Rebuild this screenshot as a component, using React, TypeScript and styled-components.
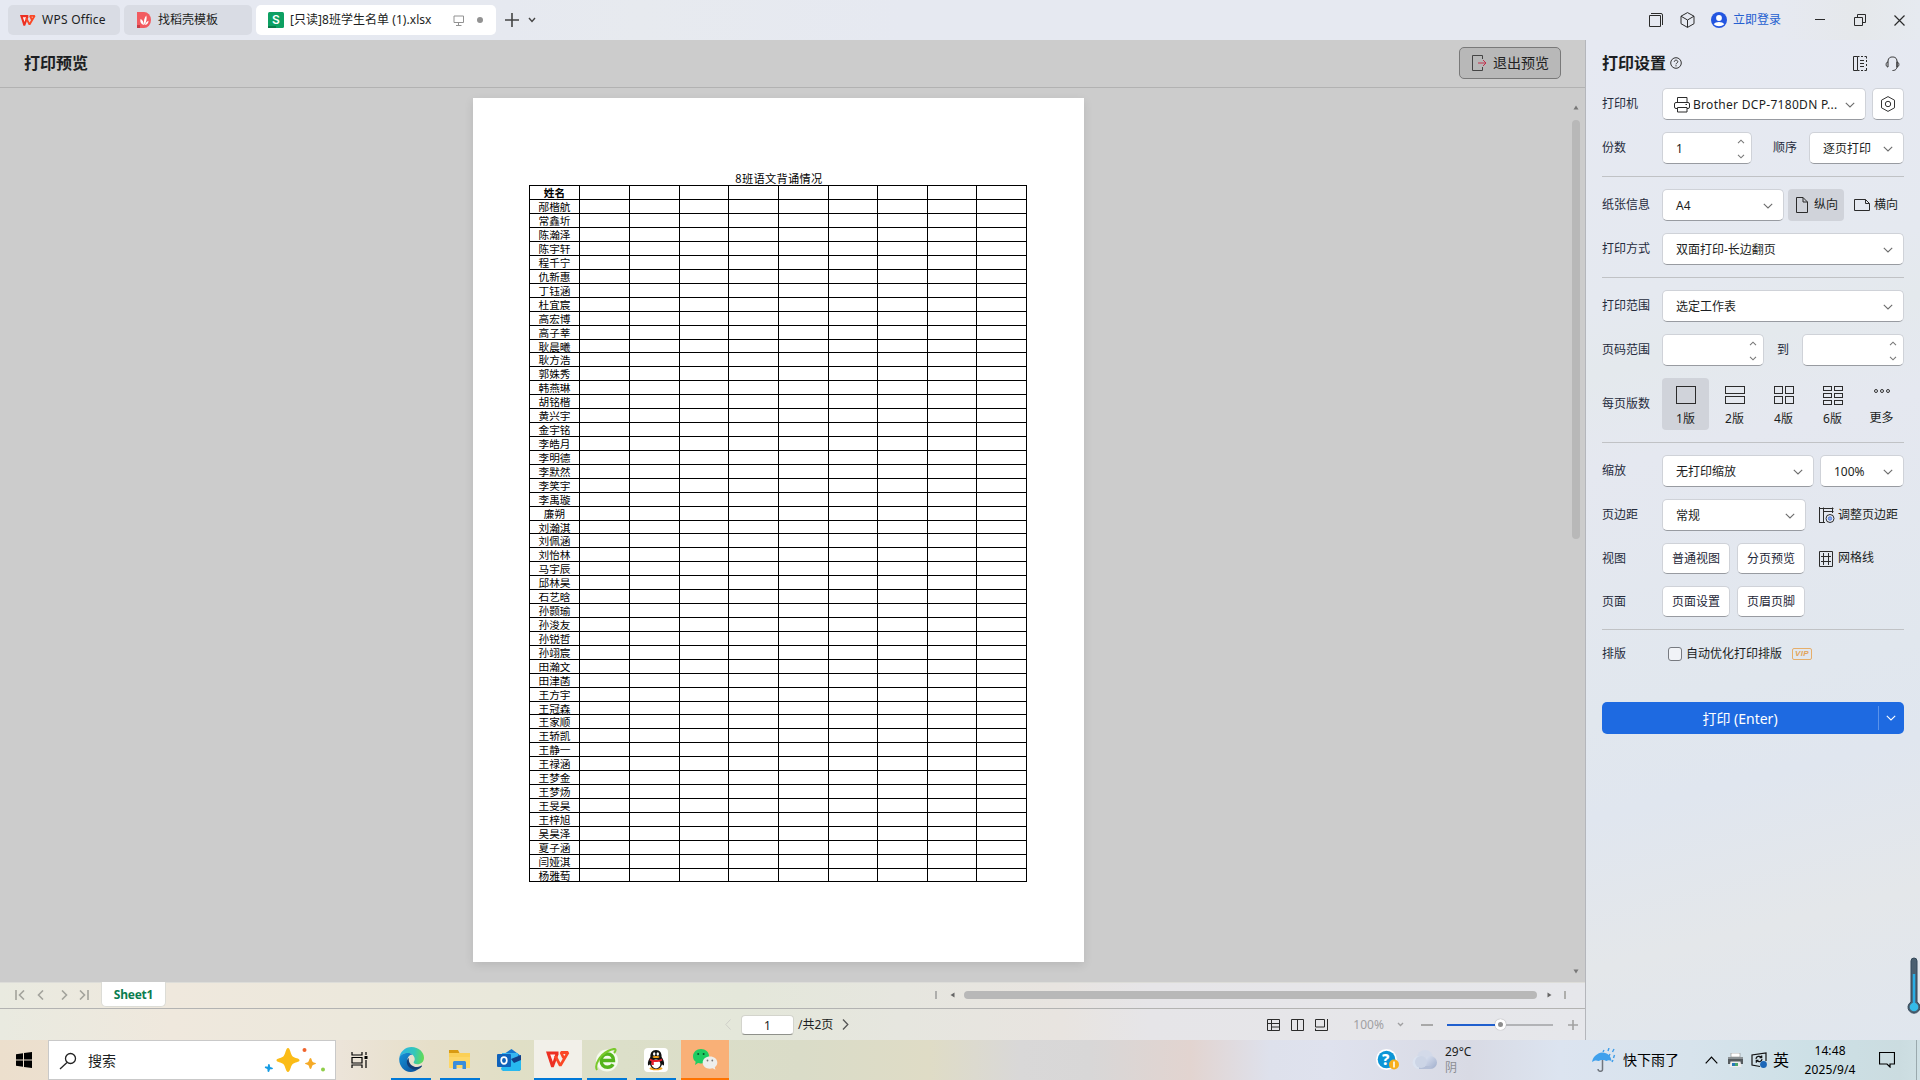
import React from "react";
import styled, { createGlobalStyle, css } from "styled-components";

const UI = `"Noto Sans", "Noto Sans CJK SC", sans-serif`;

const GlobalStyle = createGlobalStyle`
  * { box-sizing: border-box; }
  html, body { margin: 0; padding: 0; }
  body { width: 1920px; height: 1080px; overflow: hidden; font: 12px/16px ${UI}; color: #1c1e22; }
  svg { display: block; flex: none; }
`;

const Screen = styled.div`
  width: 1920px;
  height: 1080px;
  display: flex;
  flex-direction: column;
  position: relative;
  background: #e6e9f1;
`;

/* ---------- title bar ---------- */
const TitleBar = styled.header`
  height: 40px;
  flex: none;
  display: flex;
  align-items: center;
  padding-left: 8px;
  background: linear-gradient(90deg, #e6e9f2 0, #e6e9f0 500px, #e7eaef 640px, #e6e9f1 900px, #e6e9f1 1780px, #e5e8eb 1860px, #e6eaf0);
`;
const Tab = styled.div<{ $w: number; $active?: boolean }>`
  width: ${(p) => p.$w}px;
  height: 30px;
  margin-right: 4px;
  border-radius: 5px;
  display: flex;
  align-items: center;
  padding-left: 12px;
  background: ${(p) => (p.$active ? "#fff" : "#d9dce4")};
`;
const Label = styled.span<{ $ml?: number; $size?: number; $ls?: number; $color?: string; $bold?: boolean; $w?: number; $up?: number }>`
  margin-left: ${(p) => p.$ml ?? 0}px;
  padding-bottom: ${(p) => p.$up ?? 0}px;
  font-size: ${(p) => p.$size ?? 12}px;
  letter-spacing: ${(p) => p.$ls ?? 0}px;
  color: ${(p) => p.$color ?? "inherit"};
  font-weight: ${(p) => (p.$bold ? 700 : 400)};
  ${(p) => p.$w && css`width: ${p.$w}px;`}
  flex: none;
  white-space: nowrap;
`;
const Dot = styled.i`
  width: 6px;
  height: 6px;
  margin-left: 13px;
  border-radius: 50%;
  background: #929292;
`;
const WindowButtons = styled.div`
  margin-left: auto;
  display: flex;
  align-items: center;
  padding-right: 15px;
`;
const Gap = styled.span<{ $w: number }>`
  width: ${(p) => p.$w}px;
  flex: none;
`;

/* ---------- main split ---------- */
const Main = styled.div`
  height: 1000px;
  flex: none;
  display: flex;
`;
const Left = styled.section`
  width: 1585px;
  flex: none;
  display: flex;
  flex-direction: column;
`;
const PreviewHeader = styled.div`
  height: 48px;
  flex: none;
  display: flex;
  align-items: center;
  justify-content: space-between;
  padding: 0 24px 1px;
  background: #ccc;
  border-bottom: 1px solid #b2b2b2;
`;
const ExitButton = styled.button`
  width: 102px;
  height: 32px;
  display: flex;
  align-items: center;
  padding: 0 0 0 11px;
  border: 1px solid #797979;
  border-radius: 5px;
  background: #b8b8b8;
  font: 14px/18px ${UI};
  color: #222;
`;
const Canvas = styled.div`
  height: 894px;
  flex: none;
  display: flex;
  justify-content: space-between;
  background: #ccc;
`;
const Paper = styled.div`
  width: 611px;
  height: 864px;
  margin: 10px 0 0 473px;
  padding: 74px 0 0 56px;
  background: #fff;
  box-shadow: 0 3px 9px rgba(0, 0, 0, 0.1);
`;
const SheetTitle = styled.div`
  width: 498px;
  height: 13px;
  padding-left: 2px;
  text-align: center;
  font: 11.2px/12px "Noto Sans CJK SC", sans-serif;
  letter-spacing: 0.35px;
  color: #000;
`;
const Grid = styled.div`
  width: 498px;
  border-left: 1px solid #000;
  border-top: 1px solid #000;
`;
const GridRow = styled.div<{ $h: number; $head?: boolean }>`
  display: grid;
  grid-template-columns: 50px 50px 50px 49px 50px 50px 49px 50px 49px 50px;
  grid-template-rows: ${(p) => p.$h}px;
  font: ${(p) => (p.$head ? 700 : 400)} 10.67px/13px "Noto Sans CJK SC", sans-serif;
  color: #000;
`;
const Cell = styled.div`
  border-right: 1px solid #000;
  border-bottom: 1px solid #000;
  text-align: center;
  white-space: nowrap;
`;
const VScroll = styled.div`
  width: 18px;
  display: flex;
  flex-direction: column;
  align-items: center;
  padding: 17px 0 8px;
`;
const VThumb = styled.div`
  width: 8px;
  height: 419px;
  margin: 10px 0 auto;
  border-radius: 4px;
  background: #b8b8b8;
`;
const wash = "linear-gradient(90deg,#e9eae0 0,#efe8dd 170px,#ece8dc 350px,#e6e8da 640px,#e4e7da 740px,#e6e6df 900px,#e8e4e0 1060px,#e6e5e8 1150px,#e6e7eb 1585px)";
const SheetBar = styled.div`
  height: 27px;
  flex: none;
  display: flex;
  align-items: center;
  padding: 0 0 1px 15px;
  background: ${wash};
  border-top: 1px solid #ddddd9;
  border-bottom: 1px solid #b3b3b2;
`;
const SheetTab = styled.div`
  width: 65px;
  height: 25px;
  margin: -2px 0 0 12px;
  border: 1px solid #dcdcd6;
  border-top: 0;
  border-radius: 0 0 5px 5px;
  background: #fff;
  color: #0b7d4f;
  font: 700 12px/25px ${UI};
  letter-spacing: -0.25px;
  text-align: center;
`;
const HThumb = styled.div`
  width: 573px;
  height: 8px;
  border-radius: 4px;
  background: #b8b8b8;
`;
const Tick = styled.i`
  width: 2px;
  height: 8px;
  background: #aeaeac;
`;
const StatusBar = styled.div`
  height: 31px;
  flex: none;
  display: flex;
  align-items: center;
  background: ${wash};
`;
const PageInput = styled.div`
  width: 53px;
  height: 20px;
  margin: 0 4px 0 10px;
  border: 1px solid #d3d4cc;
  border-bottom-color: #8f918b;
  border-radius: 4px;
  background: #fff;
  text-align: center;
  line-height: 19px;
`;
const Track = styled.div`
  width: 106px;
  height: 12px;
  display: flex;
  align-items: center;
`;
const TrackPart = styled.i<{ $w: number; $c: string }>`
  width: ${(p) => p.$w}px;
  height: 2px;
  background: ${(p) => p.$c};
`;
const Knob = styled.i`
  width: 11px;
  height: 11px;
  border: 3px solid #fff;
  border-radius: 50%;
  background: #8d8d8d;
  box-shadow: 0 0 1px rgba(0, 0, 0, 0.45);
`;

/* ---------- settings panel ---------- */
const Panel = styled.aside`
  width: 335px;
  flex: none;
  padding: 0 16px;
  border-left: 1px solid #b4b6bb;
  background: linear-gradient(166deg, #e6e9f2 0%, #e5e9f0 25%, #e4e9ed 31%, #e5e8f0 40%, #e1e7ee 63%, #e0e6ef 72%, #e4e7ea 86%, #e0e6ee 100%);
`;
const Row = styled.div<{ $mt?: number; $h?: number }>`
  height: ${(p) => p.$h ?? 32}px;
  margin-top: ${(p) => p.$mt ?? 12}px;
  display: flex;
  align-items: center;
`;
const RowLabel = styled.span`
  width: 60px;
  flex: none;
  color: #252b3c;
`;
const Rule = styled.hr`
  height: 1px;
  margin: 12px 0 0;
  border: 0;
  background: #c0c2c5;
`;
const Field = styled.div<{ $w: number; $pl?: number }>`
  width: ${(p) => p.$w}px;
  height: 32px;
  flex: none;
  display: flex;
  align-items: center;
  justify-content: space-between;
  padding: 1px 10px 0 ${(p) => p.$pl ?? 13}px;
  border: 1px solid #cfd2d8;
  border-bottom-color: #989ba1;
  border-radius: 5px;
  background: #fff;
`;
const FieldButton = styled.button<{ $w: number; $h?: number }>`
  width: ${(p) => p.$w}px;
  height: ${(p) => p.$h ?? 31}px;
  display: flex;
  align-items: center;
  justify-content: center;
  padding: 0;
  border: 1px solid #cfd2d8;
  border-bottom-color: #989ba1;
  border-radius: 5px;
  background: #fff;
  font: 12px/16px ${UI};
  color: #1e2738;
`;
const Spin = styled.span`
  display: flex;
  flex-direction: column;
  gap: 10px;
  margin-right: -4px;
`;
const Orient = styled.div`
  width: 56px;
  height: 32px;
  margin: 0 10px 0 4px;
  padding-left: 8px;
  display: flex;
  align-items: center;
  border-radius: 4px;
  background: #d0d3da;
`;
const Layouts = styled.div`
  display: flex;
  gap: 2px;
`;
const LayoutOption = styled.div<{ $on?: boolean }>`
  width: 47px;
  height: 52px;
  display: flex;
  flex-direction: column;
  align-items: center;
  gap: 6px;
  padding-top: 8px;
  border-radius: 4px;
  background: ${(p) => (p.$on ? "#d0d3da" : "transparent")};
`;
const Check = styled.i`
  width: 14px;
  height: 14px;
  margin: 0 4px 0 6px;
  border: 1px solid #777a80;
  border-radius: 3px;
  background: #f1f3f7;
`;
const Vip = styled.span`
  width: 20px;
  height: 12px;
  margin-left: 10px;
  border: 1px solid #e6ae6a;
  border-radius: 2px;
  color: #e2a45a;
  font: italic 700 8px/10px "Liberation Sans", sans-serif;
  letter-spacing: 0.3px;
  text-align: center;
`;
const PrintButton = styled.div`
  height: 32px;
  margin-top: 34px;
  display: flex;
  align-items: center;
  border-radius: 5px;
  background: #1e6ae1;
  color: #fff;
  font-size: 14px;
`;
const PrintMain = styled.span`
  width: 277px;
  height: 24px;
  line-height: 25px;
  text-align: center;
  border-right: 1px solid #5b93ea;
`;

/* ---------- task bar ---------- */
const TaskBar = styled.footer`
  height: 40px;
  flex: none;
  display: flex;
  align-items: center;
  background: linear-gradient(90deg, #ecdfcd 0, #ece4d9 340px, #e6dfc9 430px, #e0dfc6 520px, #dcdfc9 620px, #dadcc8 800px, #dfdcc6 930px, #d9d8d8 1020px, #d8d7d7 1090px, #e2d4d0 1190px, #dee1ec 1270px, #dfe2ee 1330px, #d8dae4 1470px, #dce4f0 1560px, #d7e3ec 1690px, #cde0e6 1810px, #cbdce0 1900px, #cfe0e4);
`;
const SearchBox = styled.div`
  width: 288px;
  height: 40px;
  margin-left: 14px;
  display: flex;
  align-items: center;
  padding: 2px 0 0 10px;
  border: 1px solid #c9c9c9;
  background: #fff;
`;
const AppIcon = styled.div<{ $w?: number; $ml?: number; $bg?: string; $bar?: string }>`
  width: ${(p) => p.$w ?? 40}px;
  height: 40px;
  margin-left: ${(p) => p.$ml ?? 9}px;
  display: flex;
  align-items: center;
  justify-content: center;
  padding-top: 1px;
  background: ${(p) => p.$bg ?? "transparent"};
  border-bottom: 2px solid ${(p) => p.$bar ?? "transparent"};
`;
const Weather = styled.div`
  width: 147px;
  margin-left: 7px;
  font-size: 12px;
  line-height: 16px;
`;
const Faded = styled.div`
  color: #8b8d93;
`;
const Clock = styled.div`
  width: 64px;
  margin-left: 9px;
  text-align: center;
  font-size: 12px;
  line-height: 19px;
  letter-spacing: 0.1px;
  color: #000;
`;
const DesktopEdge = styled.i`
  width: 1px;
  height: 40px;
  margin-left: 21px;
  background: #9aa9ad;
`;
const Thermometer = styled.div`
  position: absolute;
  right: 0;
  top: 957px;
`;

/* ---------- drawings ---------- */
const Line = ({ w, h, d, c = "#2b2b2b", s = 1, f = "none" }: { w: number; h: number; d: string; c?: string; s?: number; f?: string }) => (
  <svg width={w} height={h} viewBox={`0 0 ${w} ${h}`} fill={f} stroke={c} strokeWidth={s}>
    <path d={d} />
  </svg>
);
const Down = ({ c = "#6c6c6c" }: { c?: string }) => <Line w={10} h={6} d="M.8.8 5 5 9.2.8" c={c} s={1.1} />;
const Spinner = () => (
  <Spin>
    <Line w={8} h={5} d="M1 4.2 4 1.2 7 4.2" c="#777" s={1.1} />
    <Line w={8} h={5} d="M1 .8 4 3.8 7 .8" c="#777" s={1.1} />
  </Spin>
);
const WpsLogo = ({ w = 16, h = 13 }: { w?: number; h?: number }) => (
  <svg width={w} height={h} viewBox="0 0 24 17">
    <path d="M0 .4h12.500v3.200l-4.800 12.600H5.200z" fill="#ec2f22" />
    <path d="M4.200 3.600h5L6.800 10.800z" fill="#fff" fillOpacity=".92" />
    <path d="M9.300 4.800 14.300 14.600 22 1.500H15l2.600 5.500" fill="none" stroke="#fb4826" strokeWidth="2.800" strokeLinejoin="bevel" />
  </svg>
);
const DaokeLogo = () => (
  <svg width="14" height="16" viewBox="0 0 14 16">
    <path d="M0 0h7a7 8 0 0 1 0 16H0z" fill="#f25b60" />
    <path d="M0 13h3v3H0z" fill="#c93c45" />
    <path d="M7 13C3.500 12 3 9.500 3.500 7 5.500 8 6.600 9.500 7 13zM7.300 13c-1-4 .2-7.500 2-9.500.8 2.500.2 7-2 9.500zM8 13c.5-2 1.500-3.500 3.500-4.300C11.500 11 10.500 12.500 8 13z" fill="#fff" />
  </svg>
);
const SheetLogo = () => (
  <svg width="16" height="16" viewBox="0 0 16 16">
    <rect width="16" height="16" rx="1.500" fill="#0da062" />
    <path d="M0 14h8v2H0z" fill="#087c49" />
    <text x="8" y="12.200" textAnchor="middle" fontFamily="Inter, sans-serif" fontWeight="600" fontSize="12" fill="#fff">S</text>
  </svg>
);
const Avatar = () => (
  <svg width="16" height="16" viewBox="0 0 16 16">
    <circle cx="8" cy="8" r="8" fill="#2456e0" />
    <circle cx="8" cy="6" r="2.900" fill="#fff" />
    <path d="M2.800 12.300c1.500-3 8.900-3 10.400 0-2.500 2.500-7.900 2.500-10.400 0z" fill="#fff" />
  </svg>
);
const Printer = () => <Line w={16} h={16} d="M3.500 5.500v-5h9.500v5M3.500 11.500H2A1.500 1.500 0 0 1 .5 10V7A1.500 1.500 0 0 1 2 5.500H14A1.500 1.500 0 0 1 15.500 7v3A1.500 1.500 0 0 1 14 11.500H13M3.500 10.500h9.500v4.500H3.500zM11.500 7.500h1.500" />;
const MarginIcon = () => (
  <svg width="16" height="16" viewBox="0 0 16 16" fill="none" stroke="#2b2b2b">
    <path d="M.5 0v15.500M0 1.500h14.500M4.500 .5v15M0 15.500h6M4 4.500h10.500M13.500 .5V6" />
    <circle cx="11" cy="11.500" r="4" fill="#e7ebf3" />
    <circle cx="11" cy="11.500" r="1.700" fill="#90acea" stroke="#4c7ae0" />
  </svg>
);
const Boxes = ({ cols, rows }: { cols: number; rows: number }) => {
  const w = cols === 1 ? 19 : 8;
  const h = rows === 1 ? 17 : rows === 2 ? 7 : 4;
  const sy = rows === 2 ? 10 : 7;
  const cells: React.ReactElement[] = [];
  for (let r = 0; r < rows; r++)
    for (let c = 0; c < cols; c++)
      cells.push(<rect key={`${r}-${c}`} x={0.5 + c * 11} y={0.5 + r * sy} width={w} height={h} />);
  return (
    <svg width="20" height="19" viewBox="0 0 20 19" fill="none" stroke="#2b2b2b">
      {cells}
    </svg>
  );
};
const Sparkles = () => (
  <svg width="62" height="26" viewBox="0 0 62 26">
    <path d="M24 0c2.300 0 2.500 6.500 4.700 8.500 2 1.700 6.800 1.700 6.800 3.700s-4.800 1.900-6.800 3.800C26.500 18 26.300 24 24 24s-2.500-6-4.700-8c-2-1.900-6.800-1.900-6.800-3.800s4.800-2 6.800-3.700C21.500 6.500 21.700 0 24 0z" fill="#fbbc17" />
    <path d="M46.500 10c1.200 0 1.300 3.200 2.300 4s3.200.6 3.200 1.500-2.300.8-3.200 1.600-1.100 3.900-2.300 3.900-1.300-3.100-2.300-3.900-3.200-.6-3.200-1.600 2.300-.7 3.200-1.500 1.100-4 2.300-4z" fill="#f5aa27" />
    <path d="M5 16c1.300.3.800 2.600 1.300 3s3 .4 2.700 1.600-2.500.4-3 .8-.4 2.900-1.700 2.600-.6-2.400-1-3-2.800-.6-2.500-1.800 2.300-.1 2.800-.5S3.700 15.700 5 16z" fill="#169ce4" />
    <circle cx="40.500" cy="2" r="2" fill="#f0642d" />
    <circle cx="59" cy="21.500" r="2" fill="#8fce49" />
  </svg>
);
const Edge = () => (
  <svg width="25" height="25" viewBox="0 0 24 24">
    <defs>
      <linearGradient id="eg" x1="0" y1=".3" x2="1" y2=".4"><stop offset="0" stopColor="#2cb3e6" /><stop offset=".6" stopColor="#33c6bb" /><stop offset="1" stopColor="#62db55" /></linearGradient>
      <linearGradient id="eb" x1="0" y1="0" x2="1" y2="1"><stop offset="0" stopColor="#1593d8" /><stop offset="1" stopColor="#0b4f9c" /></linearGradient>
    </defs>
    <path d="M.3 10.500C1 4.500 6 0 12 0c7 0 12 5 12 10.200 0 4-3 6.300-6.300 6.300-2.700 0-4-1-3.600-2 .4-.9 1-1.500 1-3C15 8.500 12 5.800 8.500 5.800 4.500 5.800 1.200 8 .3 10.500z" fill="url(#eg)" />
    <path d="M.3 10.500C1.400 7.600 4.600 5.800 8.500 5.800c2 0 3.500.6 4.600 1.500-3.600.2-5.100 3-5.100 5.700 0 4.500 3.800 9.400 10 8.300-2 1.700-4.200 2.700-7 2.600C4.500 23.800-.5 17.500.3 10.500z" fill="url(#eb)" />
    <path d="M9.500 10.500c-1 5 3.500 9 8 8.700 2-.1 3.700-1.400 4.500-1.400.7.500-1.500 3-4 3.700-5.500 1.500-10.500-2.500-10.500-7 0-1.700.6-3.200 2-4z" fill="#123d77" />
  </svg>
);
const Folder = () => (
  <svg width="22" height="20" viewBox="0 0 22 20">
    <path d="M0 0h9l1.500 3H0z" fill="#d99b11" />
    <path d="M0 3h21v15H0z" fill="#fdd768" />
    <path d="M0 3h21v4H0z" fill="#fbd057" />
    <path d="M4 19v-7l1-1h11l1 1v7h-3.500v-4h-6v4z" fill="#3a8edb" />
  </svg>
);
const Outlook = () => (
  <svg width="24" height="22" viewBox="0 0 24 22">
    <path d="M4 7 14.500 0 24 7v12a3 3 0 0 1-3 3H6z" fill="#1477d0" />
    <path d="M5 4h16v10H5z" fill="#35b5f2" />
    <path d="M13 11 24 6v13a3 3 0 0 1-3 3H7a3 3 0 0 1-3-3z" fill="#27b9ef" />
    <path d="m14 10 10-4v5l-7 3z" fill="#123f88" />
    <rect y="5" width="14" height="13" rx="1" fill="#0f62ba" />
    <ellipse cx="7" cy="11.500" rx="2.800" ry="3.300" fill="none" stroke="#fff" strokeWidth="1.700" />
  </svg>
);
const GreenBrowser = () => (
  <svg width="24" height="24" viewBox="0 0 24 24" fill="none">
    <circle cx="12" cy="12.500" r="11" fill="#f5faed" />
    <path d="M6 12.500h12.500c0-4-2.300-6.500-6-6.500S6.200 8.500 6.200 12.500c0 4.300 2.600 6.800 6.300 6.800 2.600 0 4.500-1 5.500-3" stroke="#55b51d" strokeWidth="3.400" />
    <path d="M2 22C-1 17 5 7 13 3s9-1.500 6 2" stroke="#7ac92c" strokeWidth="2" />
  </svg>
);
const Penguin = () => (
  <svg width="24" height="24" viewBox="0 0 24 24">
    <rect width="24" height="24" rx="4" fill="#fff" />
    <ellipse cx="12" cy="20.500" rx="6.500" ry="1.700" fill="#f6a31b" />
    <path d="M12 2c4 0 5.800 3 5.600 7 1.500 2 3 5 2.400 8-.5 1-1.300.3-2-.7C17 20 14.500 21 12 21s-5-1-6-4.700c-.7 1-1.500 1.700-2 .7-.6-3 .9-6 2.400-8C6.200 5 8 2 12 2z" fill="#111" />
    <ellipse cx="12" cy="16" rx="4.400" ry="4.400" fill="#fff" />
    <ellipse cx="10.200" cy="6" rx="1.200" ry="1.700" fill="#fff" /><ellipse cx="13.800" cy="6" rx="1.200" ry="1.700" fill="#fff" />
    <ellipse cx="12" cy="9" rx="3.400" ry="1" fill="#f6a31b" />
    <path d="M6 10.500c3.500 2 8.500 2 12 0l.4 2c-3 1.500-6 1.700-8.600 1.500V17H7.400v-3.700L5.600 12.500z" fill="#e8212b" />
  </svg>
);
const WeChat = () => (
  <svg width="25" height="21" viewBox="0 0 25 21">
    <path d="M8 0c4.500 0 8 3 8 7s-3.500 7.500-8 7.500c-1 0-2-.2-3-.5L2 16l.7-3.200C1 11.500 0 9.500 0 7.200 0 3.200 3.500 0 8 0z" fill="#20cd62" />
    <path d="M17 7.500c4.200 0 7.300 2.600 7.300 6 0 2-1 3.600-2.500 4.700l.6 2.500-2.700-1.400c-5.500 1.500-10-1.500-10-5.800 0-3.400 3.100-6 7.300-6z" fill="#eeeeec" />
    <circle cx="5.200" cy="5" r="1" fill="#0a5128" /><circle cx="10.600" cy="5" r="1" fill="#0a5128" />
    <circle cx="14.500" cy="11.500" r=".9" fill="#777" /><circle cx="19.300" cy="11.500" r=".9" fill="#777" />
  </svg>
);
const Help = () => (
  <svg width="23" height="22" viewBox="0 0 23 22">
    <circle cx="10.500" cy="10.500" r="10.500" fill="#fff" />
    <circle cx="10.500" cy="10.500" r="8.800" fill="#0c95d6" />
    <text x="9.800" y="16" textAnchor="middle" fontFamily="Noto Sans" fontWeight="800" fontSize="15" fill="#fff">?</text>
    <circle cx="18" cy="15.500" r="5" fill="#f7af1d" />
    <path d="M18 12.500v6" stroke="#fff" strokeWidth="1.600" />
  </svg>
);
const Cloud = () => (
  <svg width="26" height="20" viewBox="0 0 26 20">
    <defs>
      <linearGradient id="cl" x1="0" y1="0" x2="1" y2="1"><stop offset="0" stopColor="#dfe6f3" /><stop offset="1" stopColor="#9fadcb" /></linearGradient>
    </defs>
    <circle cx="13" cy="8" r="8" fill="#d3dae9" />
    <circle cx="18.500" cy="12.500" r="6.500" fill="url(#cl)" />
    <circle cx="7" cy="12.500" r="6.500" fill="#dbe3f0" />
    <path d="M7 16h12v3H7z" fill="#b4bfd7" />
    <circle cx="9" cy="12" r="6" fill="#ccd5e6" />
  </svg>
);
const Umbrella = () => (
  <svg width="24" height="24" viewBox="0 0 24 24" fill="none">
    <path d="M0 14C1 8 6 5 10 4.500 16 5 19 8 19.500 13c-2-1-3.500-1-5 0-2-1.500-6-1.500-8 0-2-1-4.500-.7-6.500 1z" fill="#3fa0ec" />
    <path d="M10.500 12v9.500c0 2.500-4.500 2.500-4.500-.5" stroke="#70767e" strokeWidth="1.500" />
    <path d="m12 2-1 2M17 0l-1 3M22 1l-1.500 3M18 6l-1 2M22.500 7l-1 3M21 12l-1 2" stroke="#3c9ce8" strokeWidth="1.400" />
  </svg>
);
const TrayPrinter = () => (
  <svg width="17" height="14" viewBox="0 0 17 14">
    <path d="M4 0h9v4H4z" fill="#fff" stroke="#777" strokeWidth=".5" />
    <path d="M1 4h15v7H1z" fill="#555b5e" /><path d="M1 4h15v2H1z" fill="#8b9194" />
    <path d="M3.500 8.500h10L14.500 14H2.500z" fill="#eee" /><path d="M5 10h3v3H5z" fill="#2678ba" /><path d="M8 10h3v3H8z" fill="#4aa66b" />
  </svg>
);
const InputIcon = () => (
  <svg width="17" height="16" viewBox="0 0 17 16" fill="none" stroke="#111" strokeWidth="1.200">
    <path d="M9 14.500 1 13V3l14-2v8M5 7c0-3 4-3.500 5.500-1.500M10.700 3.500v2.200H8.500M11 7c0 3-4 3.500-5.500 1.500M5.300 10.700V8.400h2.200" />
    <circle cx="12.500" cy="12.500" r="3.400" fill="#1c67b8" stroke="none" />
  </svg>
);

/* ---------- data ---------- */
const NAMES = "邴楷航 常鑫圻 陈瀚泽 陈宇轩 程千宁 仇新惠 丁钰涵 杜宜宸 高宏博 高子莘 耿晨曦 耿方浩 郭姝秀 韩燕琳 胡铭楷 黄兴宇 金宇铭 李皓月 李明德 李默然 李笑宇 李禹璇 廉朔 刘瀚淇 刘佩涵 刘怡林 马宇辰 邱林昊 石艺晗 孙颢瑜 孙浚友 孙锐哲 孙翊宸 田瀚文 田津菡 王方宇 王冠森 王家顺 王轿凯 王静一 王禄涵 王梦金 王梦炀 王旻昊 王梓旭 吴昊泽 夏子涵 闫娅淇 杨雅萄".split(" ");
const SHORT_ROWS = [12, 25, 38, 50];
const BLANKS = Array.from({ length: 9 }, (_, i) => i);

const Nav = ({ d }: { d: string }) => <Line w={10} h={10} d={d} c="#a3a39c" s={1.6} />;

export default function App() {
  return (
    <Screen>
      <GlobalStyle />
      <TitleBar>
        <Tab $w={112}>
          <WpsLogo />
          <Label $ml={6} $ls={0.25}>WPS Office</Label>
        </Tab>
        <Tab $w={128}>
          <Gap $w={1} />
          <DaokeLogo />
          <Label $ml={7}>找稻壳模板</Label>
        </Tab>
        <Tab $w={240} $active>
          <SheetLogo />
          <Label $ml={6} $w={143} $ls={0.04}>[只读]8班学生名单 (1).xlsx</Label>
          <Gap $w={20} />
          <Line w={11} h={11} d="M1 1h9.500v6.500H1zM5.500 7.500v3M3 10.500h5.500" c="#929292" />
          <Dot />
        </Tab>
        <Gap $w={5} />
        <Line w={14} h={14} d="M7 0v14M0 7h14" s={1.6} c="#444" />
        <Gap $w={9} />
        <Line w={8} h={6} d="M1 1 4 4.500 7 1" s={1.4} c="#444" />
        <WindowButtons>
          <Line w={15} h={15} d="M1.500 2.500h11v11H1.500zM3 .5h10a1.500 1.500 0 0 1 1.500 1.500v10" />
          <Gap $w={17} />
          <Line w={15} h={16} d="M7.500.6 14 4.200v7.500L7.500 15.400 1 11.700V4.200zM1 4.200 7.500 8 14 4.200M7.500 8v7.400" />
          <Gap $w={16} />
          <Avatar />
          <Label $ml={6} $color="#2560d0">立即登录</Label>
          <Gap $w={34} />
          <Line w={10} h={2} d="M0 .5h10" />
          <Gap $w={29} />
          <Line w={12} h={12} d="M.5 3.500h8v8h-8zM3.500 3.500v-3h8v8h-3" />
          <Gap $w={28} />
          <Line w={11} h={11} d="M.5.5l10 10M10.500.5l-10 10" s={1.2} />
        </WindowButtons>
      </TitleBar>

      <Main>
        <Left>
          <PreviewHeader>
            <Label $size={16} $bold $up={1}>打印预览</Label>
            <ExitButton>
              <svg width="16" height="16" viewBox="0 0 16 16" fill="none" stroke="#444">
                <path d="M11.500 4V.5h-10v15h10V12" />
                <path d="M7 8h8M12 5l3 3-3 3" stroke="#c2304c" />
              </svg>
              <Label $size={14} $ml={6} $up={1}>退出预览</Label>
            </ExitButton>
          </PreviewHeader>
          <Canvas>
            <Paper>
              <SheetTitle>8班语文背诵情况</SheetTitle>
              <Grid>
                {["姓名", ...NAMES].map((name, i) => (
                  <GridRow key={i} $h={SHORT_ROWS.includes(i + 1) ? 13 : 14} $head={i === 0}>
                    <Cell>{name}</Cell>
                    {BLANKS.map((b) => (
                      <Cell key={b} />
                    ))}
                  </GridRow>
                ))}
              </Grid>
            </Paper>
            <VScroll>
              <Line w={6} h={5} d="M3 .5 5.500 4.500h-5z" c="none" f="#777" />
              <VThumb />
              <Line w={6} h={5} d="M.5.5h5L3 4.500z" c="none" f="#777" />
            </VScroll>
          </Canvas>
          <SheetBar>
            <Nav d="M1 0v10M9 .5 4.500 5 9 9.500" />
            <Gap $w={11} />
            <Nav d="M7 .5 2.500 5 7 9.500" />
            <Gap $w={13} />
            <Nav d="M3 .5 7.500 5 3 9.500" />
            <Gap $w={10} />
            <Nav d="M1 .5 5.500 5 1 9.500M9 0v10" />
            <SheetTab>Sheet1</SheetTab>
            <Gap $w={769} />
            <Tick />
            <Gap $w={13} />
            <Line w={5} h={6} d="M4.500.5v5L.5 3z" c="none" f="#666" />
            <Gap $w={9} />
            <HThumb />
            <Gap $w={10} />
            <Line w={5} h={6} d="M.5.5v5L4.500 3z" c="none" f="#666" />
            <Gap $w={12} />
            <Tick />
          </SheetBar>
          <StatusBar>
            <Gap $w={725} />
            <Line w={6} h={11} d="M5.500.5.800 5.500l4.700 5" c="#cfcfc8" />
            <PageInput>1</PageInput>
            <Label>/共2页</Label>
            <Gap $w={9} />
            <Line w={7} h={11} d="M1 .5 5.800 5.500 1 10.500" c="#555" s={1.3} />
            <Gap $w={418} />
            <Line w={13} h={12} d="M.5.500h12v11H.5zM.5 4.500h12M4.500.5v11M4.500 8h8" />
            <Gap $w={11} />
            <Line w={13} h={12} d="M.5.500h12v11H.5zM6.500.5v11" />
            <Gap $w={11} />
            <Line w={13} h={12} d="M.5 8V.500h9V8zM12.500 0v11.500H0M.5 11.500V9.500" />
            <Gap $w={25} />
            <Label $w={44} $color="#a0a0a2">100%</Label>
            <Line w={7} h={5} d="M1 1 3.500 3.500 6 1" c="#a0a0a2" s={1.4} />
            <Gap $w={17} />
            <Line w={12} h={2} d="M0 1h12" c="#a8a8a8" s={2} />
            <Gap $w={14} />
            <Track>
              <TrackPart $w={48} $c="#1f5fce" />
              <Knob />
              <TrackPart $w={47} $c="#b2b3b6" />
            </Track>
            <Gap $w={15} />
            <Line w={10} h={10} d="M5 0v10M0 5h10" c="#a2a2a2" s={1.6} />
          </StatusBar>
        </Left>

        <Panel>
          <Row $mt={7}>
            <Label $size={16} $bold>打印设置</Label>
            <Gap $w={4} />
            <svg width="12" height="12" viewBox="0 0 12 12" fill="none" stroke="#333">
              <circle cx="6" cy="6" r="5.300" />
              <path d="M4.300 4.800c0-2.300 3.500-2.100 3.500 0C7.800 6 6 6 6 7.300M6 8.200v1.200" />
            </svg>
            <Gap $w={171} />
            <Line w={14} h={15} d="M.5.500h4v14h-4zM4.500.5h2M8 .5h2M11.500.5h2v2M13.500 4v2M13.500 8v2M13.500 12v2.500h-2M10 14.500H8M6.500 14.500h-2M7 4.500h4M7 7.500h4M7 10.500h4" />
            <Gap $w={18} />
            <Line w={15} h={15} d="M3 6c0-3 1-5 4.500-5S12 3 12 6v4c0 2.500-1 4.500-4.500 4.500M3 6C.5 6 .5 11 3 11zM12 6c2.500 0 2.500 5 0 5z" />
          </Row>
          <Row $mt={9}>
            <RowLabel>打印机</RowLabel>
            <Field $w={204} $pl={11}>
              <Printer />
              <Label $w={149} $ls={0.3}>Brother DCP-7180DN P...</Label>
              <Down />
            </Field>
            <Gap $w={6} />
            <FieldButton $w={32} $h={32}>
              <svg width="16" height="16" viewBox="0 0 16 16" fill="none" stroke="#333">
                <path d="M8 .6 14.500 4.200v7.600L8 15.400 1.500 11.800V4.200z" />
                <circle cx="8" cy="8" r="2.700" />
              </svg>
            </FieldButton>
          </Row>
          <Row>
            <RowLabel>份数</RowLabel>
            <Field $w={90}>1<Spinner /></Field>
            <Gap $w={21} />
            <Label $color="#252b3c">顺序</Label>
            <Gap $w={12} />
            <Field $w={95}>逐页打印<Down /></Field>
          </Row>
          <Rule />
          <Row>
            <RowLabel>纸张信息</RowLabel>
            <Field $w={122}>A4<Down /></Field>
            <Orient>
              <Line w={12} h={16} d="M.5.500h6.500l4.500 4.500v10.500H.5zM7 .5v4.500h4.500" />
              <Label $ml={6}>纵向</Label>
            </Orient>
            <Line w={16} h={12} d="M.5.500h11l4 4v7H.5zM11.500.5v4h4" />
            <Label $ml={4}>横向</Label>
          </Row>
          <Row>
            <RowLabel>打印方式</RowLabel>
            <Field $w={242}>双面打印-长边翻页<Down /></Field>
          </Row>
          <Rule />
          <Row>
            <RowLabel>打印范围</RowLabel>
            <Field $w={242}>选定工作表<Down /></Field>
          </Row>
          <Row>
            <RowLabel>页码范围</RowLabel>
            <Field $w={102}><span /><Spinner /></Field>
            <Gap $w={13} />
            <Label $color="#252b3c">到</Label>
            <Gap $w={13} />
            <Field $w={102}><span /><Spinner /></Field>
          </Row>
          <Row $h={52}>
            <RowLabel>每页版数</RowLabel>
            <Layouts>
              <LayoutOption $on><Boxes cols={1} rows={1} />1版</LayoutOption>
              <LayoutOption><Boxes cols={1} rows={2} />2版</LayoutOption>
              <LayoutOption><Boxes cols={2} rows={2} />4版</LayoutOption>
              <LayoutOption><Boxes cols={2} rows={3} />6版</LayoutOption>
              <LayoutOption>
                <svg width="18" height="18" viewBox="0 0 18 18" fill="none" stroke="#333">
                  <circle cx="3" cy="5" r="1.500" /><circle cx="9" cy="5" r="1.500" /><circle cx="15" cy="5" r="1.500" />
                </svg>
                更多
              </LayoutOption>
            </Layouts>
          </Row>
          <Rule />
          <Row>
            <RowLabel>缩放</RowLabel>
            <Field $w={152}>无打印缩放<Down /></Field>
            <Gap $w={6} />
            <Field $w={84}>100%<Down /></Field>
          </Row>
          <Row>
            <RowLabel>页边距</RowLabel>
            <Field $w={144}>常规<Down /></Field>
            <Gap $w={13} />
            <MarginIcon />
            <Label $ml={3}>调整页边距</Label>
          </Row>
          <Row $h={31}>
            <RowLabel>视图</RowLabel>
            <FieldButton $w={68}>普通视图</FieldButton>
            <Gap $w={7} />
            <FieldButton $w={68}>分页预览</FieldButton>
            <Gap $w={14} />
            <Line w={14} h={16} d="M.5.500h13v15H.5zM2 5.500h10M2 10.500h10M4.500 2v12M9.500 2v12" />
            <Label $ml={5} $up={1}>网格线</Label>
          </Row>
          <Row $h={31}>
            <RowLabel>页面</RowLabel>
            <FieldButton $w={68}>页面设置</FieldButton>
            <Gap $w={7} />
            <FieldButton $w={68}>页眉页脚</FieldButton>
          </Row>
          <Rule />
          <Row $h={28} $mt={10}>
            <RowLabel>排版</RowLabel>
            <Check />
            <Label>自动优化打印排版</Label>
            <Vip>VIP</Vip>
          </Row>
          <PrintButton>
            <PrintMain>打印 (Enter)</PrintMain>
            <Gap $w={7} />
            <Down c="#fff" />
          </PrintButton>
        </Panel>
      </Main>

      <TaskBar>
        <Gap $w={16} />
        <svg width="16" height="16" viewBox="0 0 16 16" fill="#000">
          <path d="M0 2.300 7 1.300v6.200H0zM8 1.100 16 0v7.500H8zM0 8.500h7v6.200l-7-1zM8 8.500h8V16l-8-1.100z" />
        </svg>
        <Gap $w={2} />
        <SearchBox>
          <svg width="18" height="18" viewBox="0 0 18 18" fill="none" stroke="#222" strokeWidth="1.300">
            <circle cx="11.500" cy="6.500" r="5" /><path d="M8 10.500 1 17" />
          </svg>
          <Label $size={14} $ml={11}>搜索</Label>
          <Gap $w={148} />
          <Sparkles />
        </SearchBox>
        <Gap $w={15} />
        <svg width="17" height="16" viewBox="0 0 17 16" fill="none" stroke="#000" strokeWidth="1.200">
          <path d="M1 0v3h10V0M1 5.500h10v5.500H1zM1 16v-3h10v3M15 0v3M15 8v8" /><path d="M13.500 4h3v3h-3z" fill="#000" stroke="none" />
        </svg>
        <AppIcon $ml={23} $bar="#0078d7"><Edge /></AppIcon>
        <AppIcon $bar="#0078d7"><Folder /></AppIcon>
        <AppIcon><Outlook /></AppIcon>
        <AppIcon $ml={5} $w={48} $bg="#f2f0e9" $bar="#0078d7"><WpsLogo w={24} h={17} /></AppIcon>
        <AppIcon $ml={5} $bar="#0078d7"><GreenBrowser /></AppIcon>
        <AppIcon $bar="#0078d7"><Penguin /></AppIcon>
        <AppIcon $ml={5} $w={48} $bg="#f9b077" $bar="#ff7300"><WeChat /></AppIcon>
        <Gap $w={647} />
        <Help />
        <Gap $w={13} />
        <Cloud />
        <Weather>
          29°C
          <Faded>阴</Faded>
        </Weather>
        <Umbrella />
        <Label $size={14} $ml={7} $color="#000">快下雨了</Label>
        <Gap $w={26} />
        <Line w={13} h={8} d="M.7 7.300 6.500 1.200l5.800 6.100" c="#000" s={1.2} />
        <Gap $w={9} />
        <TrayPrinter />
        <Gap $w={7} />
        <InputIcon />
        <Gap $w={5} />
        <Label $size={16} $color="#000">英</Label>
        <Clock>
          14:48
          <br />
          2025/9/4
        </Clock>
        <Gap $w={17} />
        <Line w={16} h={16} d="M.5.500h15v11.500h-4.500v3L8 12H.5z" c="#000" s={1.2} />
        <DesktopEdge />
      </TaskBar>

      <Thermometer>
        <svg width="13" height="57" viewBox="0 0 13 57">
          <path d="M4 4a3 3 0 0 1 6 0v41a6 6 0 1 1-6 0z" fill="#4b5f70" stroke="#34495a" />
          <path d="M7 17v30" stroke="#29aee6" strokeWidth="2.500" />
          <circle cx="7" cy="50" r="4.300" fill="#35bbe8" />
        </svg>
      </Thermometer>
    </Screen>
  );
}
